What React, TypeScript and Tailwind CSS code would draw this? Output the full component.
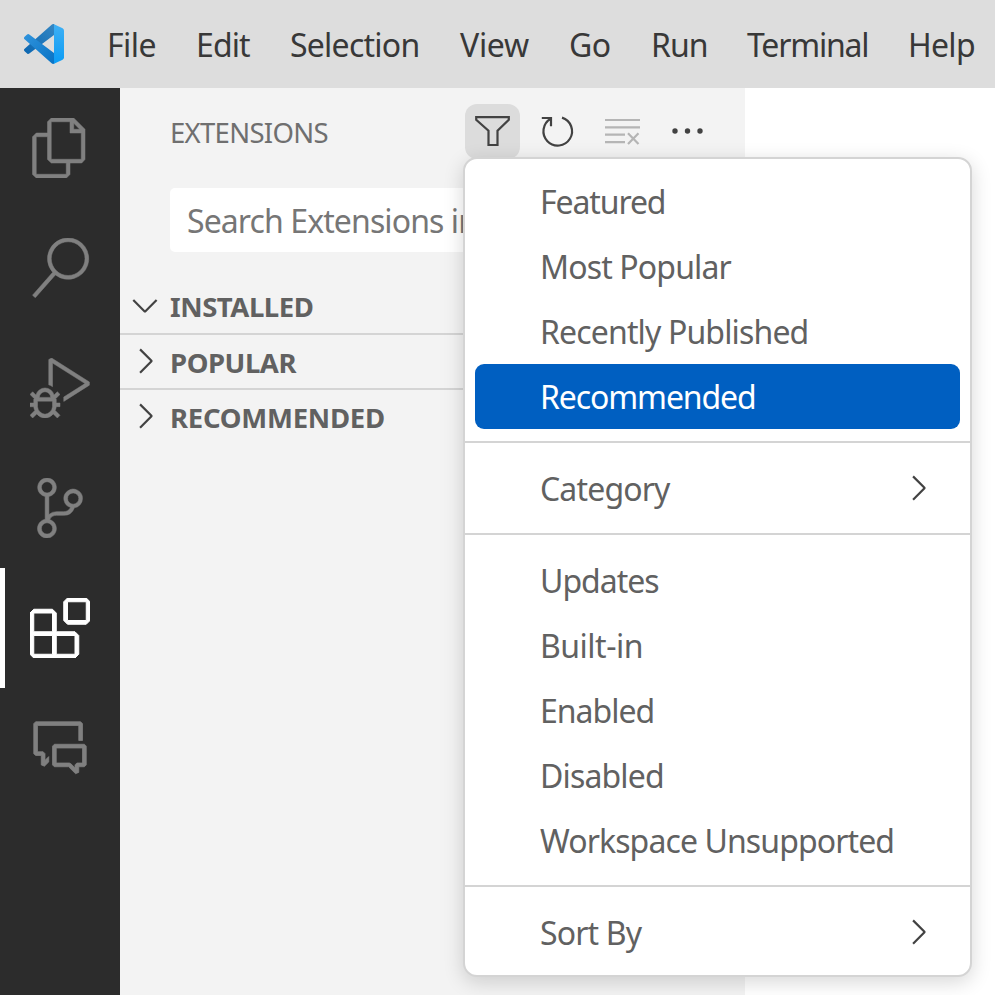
import React from "react";
import {
  VscFiles,
  VscSearch,
  VscDebugAlt,
  VscSourceControl,
  VscExtensions,
  VscCommentDiscussion,
  VscChevronRight,
  VscChevronDown,
} from "react-icons/vsc";

const menus = [
  { label: "File", cls: "w-[89px] tracking-[-0.5px]" },
  { label: "Edit", cls: "w-[94px] tracking-[-0.9px]" },
  { label: "Selection", cls: "w-[170px] tracking-[-0.75px]" },
  { label: "View", cls: "w-[109px] tracking-[-0.3px]" },
  { label: "Go", cls: "w-[82px]" },
  { label: "Run", cls: "w-[96px] tracking-[-1px]" },
  { label: "Terminal", cls: "w-[161px] tracking-[-1.2px]" },
  { label: "Help", cls: "w-[70px] tracking-[-0.7px]" },
];

function Logo() {
  return (
    <svg className="h-10 w-10 shrink-0" viewBox="0 0 40 40">
      <defs>
        <linearGradient id="plate" x1="0" y1="0" x2="0" y2="1">
          <stop offset="0" stopColor="#3fb0f4" />
          <stop offset="1" stopColor="#0a9cf5" />
        </linearGradient>
        <linearGradient id="down" x1="0" y1="0" x2="1" y2="1">
          <stop offset="0" stopColor="#2f93dc" />
          <stop offset="1" stopColor="#0872c4" />
        </linearGradient>
        <linearGradient id="up" x1="0" y1="1" x2="1" y2="0">
          <stop offset="0" stopColor="#0b66b0" />
          <stop offset="1" stopColor="#3487c4" />
        </linearGradient>
      </defs>
      <path fill="url(#up)" d="M30 11 5.3 29.6a1.7 1.7 0 0 1-2.2-.1L.6 27.2a1.7 1.7 0 0 1 0-2.500L27.600.7C28.300 0 29.300-.1 30.200.2Z" />
      <path fill="url(#down)" d="M30 29 5.300 10.400a1.700 1.700 0 0 0-2.200.1L.6 12.800a1.700 1.700 0 0 0 0 2.500l27 24c.700.7 1.700.8 2.600.5Z" />
      <path fill="url(#plate)" d="M30 .2 38.600 4.300A2.500 2.500 0 0 1 40 6.500V33.500a2.500 2.500 0 0 1-1.400 2.200L30 39.800Z" />
    </svg>
  );
}

// 40px toolbar glyph with a shared outline weight
function Tool({ children }: { children: React.ReactNode }) {
  return (
    <svg className="h-10 w-10 shrink-0" viewBox="0.5 0 40 40" fill="none" stroke="currentColor" strokeWidth="2.2">
      {children}
    </svg>
  );
}

function Activity({ active, children }: { active?: boolean; children: React.ReactNode }) {
  return (
    <div
      className={
        active
          ? "flex h-[120px] items-center border-l-[5px] border-white pl-[25px] text-white [&_path]:stroke-current [&_path]:[stroke-width:0.4px]"
          : "flex h-[120px] items-center pl-[30px] text-[#808080] [&_path]:stroke-current [&_path]:[stroke-width:0.2px]"
      }
    >
      {children}
    </div>
  );
}

function Item({ label, selected, arrow, cls }: { label: string; selected?: boolean; arrow?: boolean; cls?: string }) {
  return (
    <div
      className={
        selected
          ? "mx-[10px] flex h-[65px] items-center rounded-[9px] bg-[#005fc1] pl-[65px] text-white"
          : "mx-[10px] flex h-[65px] items-center pl-[65px] pr-[22px] text-[#616161]"
      }
    >
      <span className={"grow pt-px " + (cls ?? "tracking-[-0.85px]")}>{label}</span>
      {arrow && <VscChevronRight className="mb-[2px] h-10 w-10 text-[#424242]" />}
    </div>
  );
}

const Rule = () => <div className="h-[2px] bg-[#d4d4d4]" />;

export default function App() {
  return (
    <div className="flex h-[995px] w-[995px] flex-col overflow-hidden bg-white font-['Noto_Sans',sans-serif] text-[32px] tracking-[-0.5px] whitespace-nowrap">
      <header className="flex h-[88px] shrink-0 items-center bg-[#dddddd] pl-6 text-[#383838]">
        <Logo />
        <nav className="ml-[43px] flex pt-[2px]">
          {menus.map((m) => (
            <span key={m.label} className={m.cls}>{m.label}</span>
          ))}
        </nav>
      </header>
      <div className="flex grow">
        <aside className="w-[120px] bg-[#2c2c2c]">
          <Activity><VscFiles className="h-[60px] w-[60px]" /></Activity>
          <Activity><VscSearch className="h-[60px] w-[60px]" /></Activity>
          <Activity><VscDebugAlt className="h-[60px] w-[60px]" /></Activity>
          <Activity><VscSourceControl className="h-[60px] w-[60px]" /></Activity>
          <Activity active><VscExtensions className="h-[60px] w-[60px]" /></Activity>
          <Activity><VscCommentDiscussion className="h-[60px] w-[60px]" /></Activity>
        </aside>
        <main className="relative w-[625px] bg-[#f3f3f3]">
          <div className="flex h-[86px] items-center pl-[50px]">
            <span className="w-[295px] pt-[4px] text-[27.5px] tracking-[-0.7px] text-[#6f6f6f]">EXTENSIONS</span>
            <div className="flex items-center gap-[10px] text-[#424242]">
              <span className="flex h-[55px] w-[55px] items-center justify-center rounded-[12px] bg-[#dcdcdc]">
                <Tool><path d="M3.700 6.200H36.300V8.800L25 19.700V34H16V19.700L3.700 8.800Z" /></Tool>
              </span>
              <span className="flex w-[55px] justify-center">
                <Tool><path d="M24.500 6.600A14.300 14.300 0 1 1 13.200 7.800M4.300 7H13.500V15.300" /></Tool>
              </span>
              <span className="flex w-[55px] justify-center text-[#b5b5b5]">
                <Tool><path d="M2.500 9H37.500M2.500 16.300H37.500M2.500 23.700H22.500M2.500 31.200H22.500M25.500 22.300 36 33M36 22.300 25.500 33" /></Tool>
              </span>
              <span className="flex w-[55px] justify-center">
                <Tool>
                  <g fill="currentColor" stroke="none">
                    <circle cx="7.5" cy="20" r="2.7" />
                    <circle cx="20" cy="20" r="2.7" />
                    <circle cx="32.5" cy="20" r="2.7" />
                  </g>
                </Tool>
              </span>
            </div>
          </div>
          <div className="mt-[14px] ml-[50px] flex h-[64px] w-[540px] items-center rounded-[5px] bg-white pl-[17px] text-[#767676]">
            <span className="w-[276px] overflow-hidden pt-[2px] tracking-[-0.9px]">Search Extensions in</span>
          </div>
          <div className="mt-[26px] text-[27.5px] font-bold tracking-[-0.45px] text-[#616161]">
            <div className="flex h-[57px] items-center border-b-2 border-[#d4d4d4] pl-[5px]">
              <VscChevronDown className="mr-[5px] mb-[2px] h-10 w-10 text-[#424242]" /><span className="pt-[2px]">INSTALLED</span>
            </div>
            <div className="flex h-[55px] items-center border-b-2 border-[#d4d4d4] pl-[5px]">
              <VscChevronRight className="mr-[5px] mb-[2px] h-10 w-10 text-[#424242]" /><span className="pt-[2px]">POPULAR</span>
            </div>
            <div className="flex h-[53px] items-center pl-[5px]">
              <VscChevronRight className="mr-[5px] mb-[2px] h-10 w-10 text-[#424242]" /><span className="pt-[2px] tracking-[-0.25px]">RECOMMENDED</span>
            </div>
          </div>
          <div className="absolute top-[69px] left-[343px] h-[820px] w-[509px] rounded-[14px] border-2 border-[#d4d4d4] bg-white pt-[10px] shadow-[0_5px_20px_rgba(0,0,0,0.16)]">
            <Item label="Featured" cls="tracking-[-1.1px]" />
            <Item label="Most Popular" />
            <Item label="Recently Published" />
            <Item label="Recommended" selected cls="tracking-[-1.1px]" />
            <div className="h-[12px]" />
            <Rule />
            <div className="pt-[13px] pb-[12px]"><Item label="Category" arrow /></div>
            <Rule />
            <div className="pt-[13px] pb-[12px]">
              <Item label="Updates" cls="tracking-[-1px]" />
              <Item label="Built-in" cls="tracking-[-0.5px]" />
              <Item label="Enabled" cls="tracking-[-1px]" />
              <Item label="Disabled" />
              <Item label="Workspace Unsupported" cls="tracking-[-0.9px]" />
            </div>
            <Rule />
            <div className="pt-[13px]"><Item label="Sort By" arrow /></div>
          </div>
        </main>
      </div>
    </div>
  );
}
